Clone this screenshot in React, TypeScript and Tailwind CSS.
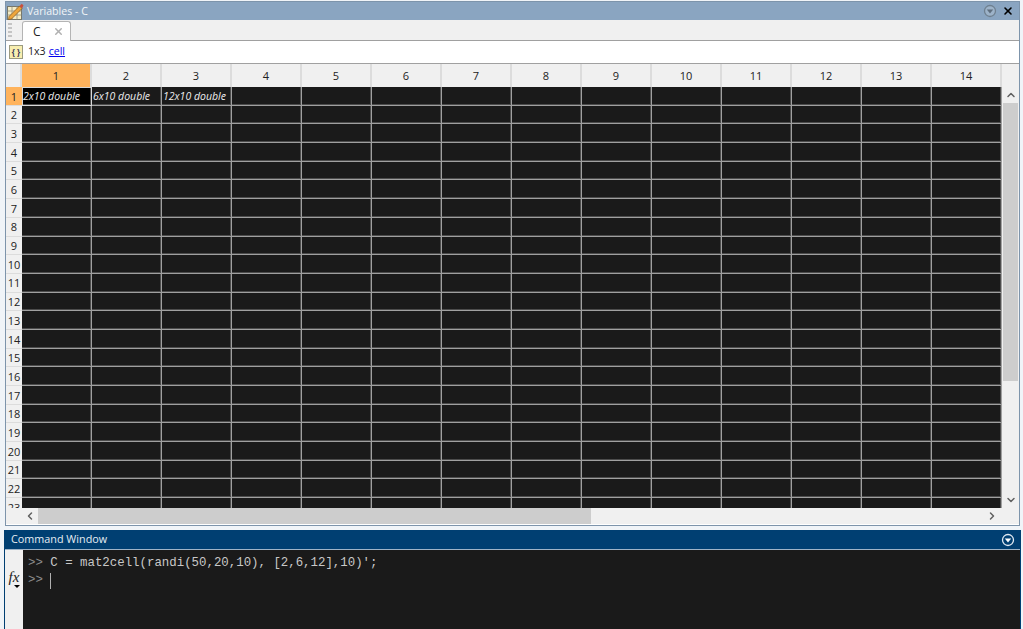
import React from 'react';
import { ChevronUp, ChevronDown, ChevronLeft, ChevronRight, X } from 'lucide-react';

const colW = 70;
const cols = Array.from({ length: 14 }, (_, i) => i + 1);
const rows = Array.from({ length: 23 }, (_, i) => i + 1);
const cells: Record<number, string> = { 1: '2x10 double', 2: '6x10 double', 3: '12x10 double' };

function PanelMenu({ light }: { light?: boolean }) {
  return (
    <svg width="14" height="14" viewBox="0 0 14 14">
      <circle cx="7" cy="7" r="5.5" fill={light ? 'none' : '#9db3c9'} stroke={light ? '#dfe9f2' : '#6f8090'} strokeWidth="1.3" />
      <path d="M3.8 5.5h6.4L7 9.5z" fill={light ? '#ffffff' : '#5f6f7f'} />
    </svg>
  );
}

function VarIcon() {
  return (
    <svg width="17" height="17" viewBox="0 0 17 17">
      <rect x="0.5" y="3.5" width="14" height="13" fill="#f5ecc4" stroke="#77776a" />
      <path d="M0.5 8h14M0.5 12h14M5 3.5v13M10 3.5v13" stroke="#8f8f80" strokeWidth="0.8" />
      <path d="M2 13.5 L12.5 3 L15 5.5 L4.5 16 L1.5 16.5z" fill="#eda63c" stroke="#85561a" strokeWidth="0.7" />
      <path d="M12.5 3 L14.8 0.7 L16.5 2.4 L15 5.5z" fill="#c9503e" />
    </svg>
  );
}

function App() {
  return (
    <div className="w-[1023px] h-[629px] overflow-hidden bg-[#f0f4f8] flex flex-col font-['Open_Sans',sans-serif] text-[#222]">
      {/* Variables panel */}
      <div className="ml-[5px] mr-[3px] mt-[1px] h-[525px] shrink-0 flex flex-col border border-[#7d94ab] bg-white">
        <div className="h-[18px] shrink-0 bg-[#8aa5c1] flex items-center pl-[1px] pr-[5px]">
          <VarIcon />
          <span className="ml-[3px] text-[10.6px] leading-none text-[#f2f5f8]">Variables - C</span>
          <div className="ml-auto flex items-center gap-[5px]">
            <PanelMenu />
            <X size={12} strokeWidth={3.2} className="text-black" />
          </div>
        </div>
        <div className="h-[21px] shrink-0 bg-[#f0f0f0] border-b border-[#a0a0a0] flex items-end pl-[2px]">
          <div className="w-[4px] h-[14px] mb-[3px] mr-[10px] border-x-2 border-dotted border-[#c4c4c4]" />
          <div className="relative top-[1px] w-[49px] h-[20px] bg-white border border-b-0 border-[#b4b4b4] rounded-t-[3px] flex items-center pl-[10px] gap-[12px]">
            <span className="text-[12px] leading-none">C</span>
            <X size={11} strokeWidth={3.2} className="text-[#b0b0b0]" />
          </div>
        </div>
        <div className="h-[23px] shrink-0 bg-white flex items-center pl-[3px] border-b border-[#a0a0a0]">
          <div className="w-[14px] h-[14px] bg-[#f7eeb0] border border-[#9a9a80] flex items-center justify-center text-[8px] font-bold text-[#335] leading-none">{'{ }'}</div>
          <span className="ml-[5px] text-[10.6px]">1x3</span>
          <span className="ml-[3px] text-[10.6px] text-[#0000ee] underline">cell</span>
        </div>
        <div className="flex-1 min-h-0 flex flex-col bg-[#f0f0f0]">
          <div className="flex-1 min-h-0 flex">
            <div className="flex-1 min-w-0 overflow-hidden">
              {/* column headers */}
              <div className="flex h-[23px]">
                <div className="w-[16px] shrink-0 border-r-2 border-[#dcdcdc] bg-[#f0f0f0]" />
                {cols.map((c) => (
                  <div
                    key={c}
                    style={{ width: colW }}
                    className={`shrink-0 flex items-center justify-center pt-[2px] text-[11px] border-r-2 border-[#dcdcdc] ${c === 1 ? 'bg-[#ffb35c]' : 'bg-[#f0f0f0]'}`}
                  >
                    {c}
                  </div>
                ))}
              </div>
              {rows.map((r) => (
                <div key={r} className="flex h-[18.7px]">
                  <div className={`w-[16px] shrink-0 flex items-center justify-center pt-[2px] text-[11px] border-b border-[#dcdcdc] ${r === 1 ? 'bg-[#ffb35c]' : 'bg-[#f0f0f0]'}`}>
                    {r}
                  </div>
                  {cols.map((c) => (
                    <div
                      key={c}
                      style={{ width: colW }}
                      className={`shrink-0 border-r border-b border-[#a0a0a0] shadow-[inset_-1px_-1px_0_#4c4c4c] text-[10.5px] italic text-[#ededed] whitespace-nowrap flex items-center pt-[3px] ${r === 1 && c === 1 ? 'outline outline-1 -outline-offset-1 outline-[#d8d8d8] bg-black' : 'bg-[#1a1a1a]'}`}
                    >
                      <span className="pl-[1px]">{r === 1 ? cells[c] : ''}</span>
                    </div>
                  ))}
                </div>
              ))}
            </div>
            {/* vertical scrollbar */}
            <div className="w-[17px] shrink-0 flex flex-col bg-[#f0f0f0] pl-[1px] pr-[1px]">
              <div className="h-[23px] shrink-0" />
              <div className="h-[16px] shrink-0 flex items-center justify-center"><ChevronUp size={12} strokeWidth={3} className="text-[#606060]" /></div>
              <div className="h-[278px] shrink-0 bg-[#cdcdcd]" />
              <div className="flex-1" />
              <div className="h-[16px] shrink-0 flex items-center justify-center"><ChevronDown size={12} strokeWidth={3} className="text-[#606060]" /></div>
            </div>
          </div>
          {/* horizontal scrollbar */}
          <div className="h-[17px] shrink-0 flex items-center pl-[15px] pr-[17px] border-b border-white">
            <div className="w-[17px] flex justify-center"><ChevronLeft size={12} strokeWidth={3} className="text-[#606060]" /></div>
            <div className="w-[553px] h-full bg-[#cdcdcd]" />
            <div className="flex-1" />
            <div className="w-[20px] flex justify-center"><ChevronRight size={12} strokeWidth={3} className="text-[#606060]" /></div>
          </div>
        </div>
      </div>
      {/* Command window */}
      <div className="mt-[4px] ml-[4px] mr-[2px] flex-1 min-h-0 flex flex-col border-x border-[#003f72]">
        <div className="h-[20px] shrink-0 bg-[#003f72] flex items-center pl-[6px] pr-[5px] border-b border-[#9fb4c8]">
          <span className="text-[10.8px] text-[#e6edf3]">Command Window</span>
          <div className="ml-auto"><PanelMenu light /></div>
        </div>
        <div className="flex-1 min-h-0 flex">
          <div className="w-[18px] shrink-0 bg-[#f0f0f0] pt-[20px] flex flex-col items-center">
            <span className="font-['Liberation_Serif',serif] italic text-[15px] leading-[15px] text-[#222]">fx</span>
            <div className="ml-[6px] w-0 h-0 border-x-[3px] border-x-transparent border-t-[3px] border-t-black" />
          </div>
          <div className="flex-1 bg-[#1a1a1a] pl-[5px] pt-[5px] font-['Liberation_Mono',monospace] text-[12.4px] leading-[17px] text-[#c8c8c8] whitespace-pre">
            <div><span className="text-[#8c8c8c]">&gt;&gt;</span> C = mat2cell(randi(50,20,10), [2,6,12],10)';</div>
            <div className="flex items-center"><span className="text-[#8c8c8c]">&gt;&gt; </span><span className="inline-block w-[1px] h-[16px] bg-[#b0b0b0]" /></div>
          </div>
        </div>
      </div>
    </div>
  );
}

export default App;
